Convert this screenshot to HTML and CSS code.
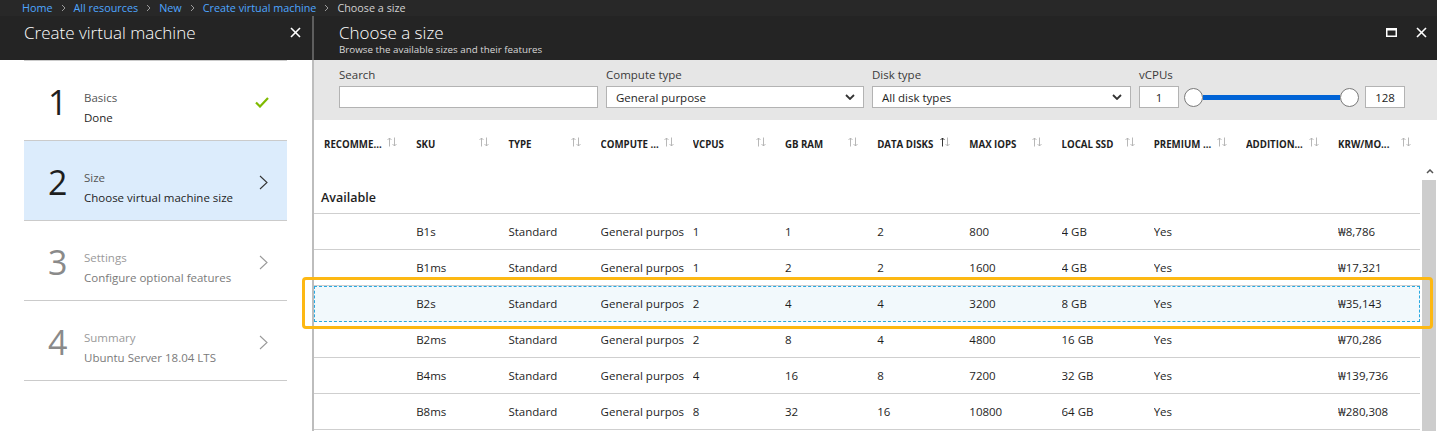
FILE: index.html
```html
<!DOCTYPE html>
<html lang="en">
<head>
<meta charset="utf-8">
<title>Choose a size</title>
<link rel="stylesheet" href="styles.css">
</head>
<body>
<nav class="breadcrumb">
  <a class="crumb">Home</a>
  <svg class="sep" viewBox="0 0 5 8"><polyline points="1,1 4,4 1,7"/></svg>
  <a class="crumb">All resources</a>
  <svg class="sep" viewBox="0 0 5 8"><polyline points="1,1 4,4 1,7"/></svg>
  <a class="crumb">New</a>
  <svg class="sep" viewBox="0 0 5 8"><polyline points="1,1 4,4 1,7"/></svg>
  <a class="crumb">Create virtual machine</a>
  <svg class="sep" viewBox="0 0 5 8"><polyline points="1,1 4,4 1,7"/></svg>
  <span class="crumb current">Choose a size</span>
</nav>

<div class="main">
  <section class="blade-left">
    <header class="blade-head left-head">
      <h1 class="blade-title">Create virtual machine</h1>
      <svg class="close-icon" viewBox="0 0 11 11"><line x1="1" y1="1" x2="10" y2="10"/><line x1="10" y1="1" x2="1" y2="10"/></svg>
    </header>
    <div class="steps">
      <div class="step">
        <div class="step-num">1</div>
        <div class="step-text"><div class="step-label">Basics</div><div class="step-desc">Done</div></div>
        <svg class="check-icon" viewBox="0 0 14 11"><polyline points="1,5.5 5,9.5 13,1"/></svg>
      </div>
      <div class="step active">
        <div class="step-num">2</div>
        <div class="step-text"><div class="step-label">Size</div><div class="step-desc">Choose virtual machine size</div></div>
        <svg class="chev-icon" viewBox="0 0 9 15"><polyline points="1,1 8,7.5 1,14"/></svg>
      </div>
      <div class="step muted">
        <div class="step-num">3</div>
        <div class="step-text"><div class="step-label">Settings</div><div class="step-desc">Configure optional features</div></div>
        <svg class="chev-icon" viewBox="0 0 9 15"><polyline points="1,1 8,7.5 1,14"/></svg>
      </div>
      <div class="step muted">
        <div class="step-num">4</div>
        <div class="step-text"><div class="step-label">Summary</div><div class="step-desc">Ubuntu Server 18.04 LTS</div></div>
        <svg class="chev-icon" viewBox="0 0 9 15"><polyline points="1,1 8,7.5 1,14"/></svg>
      </div>
    </div>
  </section>

  <section class="blade-right">
    <header class="blade-head right-head">
      <div class="head-titles">
        <h1 class="blade-title">Choose a size</h1>
        <p class="blade-sub">Browse the available sizes and their features</p>
      </div>
      <div class="head-icons">
        <svg class="max-icon" viewBox="0 0 11 9"><rect class="max-frame" x="0.75" y="1" width="9.5" height="7.25"/><rect class="max-bar" x="0" y="0" width="11" height="2.5"/></svg>
        <svg class="close-icon" viewBox="0 0 11 11"><line x1="1" y1="1" x2="10" y2="10"/><line x1="10" y1="1" x2="1" y2="10"/></svg>
      </div>
    </header>

    <div class="rbody">
      <div class="filters">
        <div class="field w-search">
          <label class="field-label">Search</label>
          <div class="input"></div>
        </div>
        <div class="field w-compute">
          <label class="field-label">Compute type</label>
          <div class="input select"><span>General purpose</span><svg class="dd-icon" viewBox="0 0 10 6"><polyline points="1,1 5,5 9,1"/></svg></div>
        </div>
        <div class="field w-disk">
          <label class="field-label">Disk type</label>
          <div class="input select"><span>All disk types</span><svg class="dd-icon" viewBox="0 0 10 6"><polyline points="1,1 5,5 9,1"/></svg></div>
        </div>
        <div class="field">
          <label class="field-label">vCPUs</label>
          <div class="range">
            <div class="input num">1</div>
            <div class="slider"><span class="thumb"></span><span class="track"></span><span class="thumb"></span></div>
            <div class="input num">128</div>
          </div>
        </div>
      </div>

      <div class="thead">
        <div class="th"><span class="th-label">RECOMME...</span><svg class="sort" viewBox="0 0 10 10"><path class="up" d="M2.5 9.5V1M0.5 3L2.5 1L4.5 3"/><path class="down" d="M7.5 0.5V9M5.5 7L7.5 9L9.5 7"/></svg></div>
        <div class="th"><span class="th-label">SKU</span><svg class="sort" viewBox="0 0 10 10"><path class="up" d="M2.5 9.5V1M0.5 3L2.5 1L4.5 3"/><path class="down" d="M7.5 0.5V9M5.5 7L7.5 9L9.5 7"/></svg></div>
        <div class="th"><span class="th-label">TYPE</span><svg class="sort" viewBox="0 0 10 10"><path class="up" d="M2.5 9.5V1M0.5 3L2.5 1L4.5 3"/><path class="down" d="M7.5 0.5V9M5.5 7L7.5 9L9.5 7"/></svg></div>
        <div class="th"><span class="th-label">COMPUTE ...</span><svg class="sort" viewBox="0 0 10 10"><path class="up" d="M2.5 9.5V1M0.5 3L2.5 1L4.5 3"/><path class="down" d="M7.5 0.5V9M5.5 7L7.5 9L9.5 7"/></svg></div>
        <div class="th"><span class="th-label">VCPUS</span><svg class="sort" viewBox="0 0 10 10"><path class="up" d="M2.5 9.5V1M0.5 3L2.5 1L4.5 3"/><path class="down" d="M7.5 0.5V9M5.5 7L7.5 9L9.5 7"/></svg></div>
        <div class="th"><span class="th-label">GB RAM</span><svg class="sort" viewBox="0 0 10 10"><path class="up" d="M2.5 9.5V1M0.5 3L2.5 1L4.5 3"/><path class="down" d="M7.5 0.5V9M5.5 7L7.5 9L9.5 7"/></svg></div>
        <div class="th"><span class="th-label">DATA DISKS</span><svg class="sort sorted" viewBox="0 0 10 10"><path class="up" d="M2.5 9.5V1M0.5 3L2.5 1L4.5 3"/><path class="down" d="M7.5 0.5V9M5.5 7L7.5 9L9.5 7"/></svg></div>
        <div class="th"><span class="th-label">MAX IOPS</span><svg class="sort" viewBox="0 0 10 10"><path class="up" d="M2.5 9.5V1M0.5 3L2.5 1L4.5 3"/><path class="down" d="M7.5 0.5V9M5.5 7L7.5 9L9.5 7"/></svg></div>
        <div class="th"><span class="th-label">LOCAL SSD</span><svg class="sort" viewBox="0 0 10 10"><path class="up" d="M2.5 9.5V1M0.5 3L2.5 1L4.5 3"/><path class="down" d="M7.5 0.5V9M5.5 7L7.5 9L9.5 7"/></svg></div>
        <div class="th"><span class="th-label">PREMIUM ...</span><svg class="sort" viewBox="0 0 10 10"><path class="up" d="M2.5 9.5V1M0.5 3L2.5 1L4.5 3"/><path class="down" d="M7.5 0.5V9M5.5 7L7.5 9L9.5 7"/></svg></div>
        <div class="th"><span class="th-label">ADDITION...</span><svg class="sort" viewBox="0 0 10 10"><path class="up" d="M2.5 9.5V1M0.5 3L2.5 1L4.5 3"/><path class="down" d="M7.5 0.5V9M5.5 7L7.5 9L9.5 7"/></svg></div>
        <div class="th"><span class="th-label">KRW/MO...</span><svg class="sort" viewBox="0 0 10 10"><path class="up" d="M2.5 9.5V1M0.5 3L2.5 1L4.5 3"/><path class="down" d="M7.5 0.5V9M5.5 7L7.5 9L9.5 7"/></svg></div>
      </div>

      <div class="tbody">
        <div class="rows">
          <div class="group">Available</div>
          <div class="row"><span class="td"></span><span class="td">B1s</span><span class="td">Standard</span><span class="td">General purpose</span><span class="td">1</span><span class="td">1</span><span class="td">2</span><span class="td">800</span><span class="td">4 GB</span><span class="td">Yes</span><span class="td"></span><span class="td">₩8,786</span></div>
          <div class="row"><span class="td"></span><span class="td">B1ms</span><span class="td">Standard</span><span class="td">General purpose</span><span class="td">1</span><span class="td">2</span><span class="td">2</span><span class="td">1600</span><span class="td">4 GB</span><span class="td">Yes</span><span class="td"></span><span class="td">₩17,321</span></div>
          <div class="row selected"><span class="td"></span><span class="td">B2s</span><span class="td">Standard</span><span class="td">General purpose</span><span class="td">2</span><span class="td">4</span><span class="td">4</span><span class="td">3200</span><span class="td">8 GB</span><span class="td">Yes</span><span class="td"></span><span class="td">₩35,143</span></div>
          <div class="row"><span class="td"></span><span class="td">B2ms</span><span class="td">Standard</span><span class="td">General purpose</span><span class="td">2</span><span class="td">8</span><span class="td">4</span><span class="td">4800</span><span class="td">16 GB</span><span class="td">Yes</span><span class="td"></span><span class="td">₩70,286</span></div>
          <div class="row"><span class="td"></span><span class="td">B4ms</span><span class="td">Standard</span><span class="td">General purpose</span><span class="td">4</span><span class="td">16</span><span class="td">8</span><span class="td">7200</span><span class="td">32 GB</span><span class="td">Yes</span><span class="td"></span><span class="td">₩139,736</span></div>
          <div class="row"><span class="td"></span><span class="td">B8ms</span><span class="td">Standard</span><span class="td">General purpose</span><span class="td">8</span><span class="td">32</span><span class="td">16</span><span class="td">10800</span><span class="td">64 GB</span><span class="td">Yes</span><span class="td"></span><span class="td">₩280,308</span></div>
        </div>
        <div class="scrollbar">
          <div class="sb-up"><svg viewBox="0 0 8 5"><polyline points="1,4 4,1 7,4"/></svg></div>
          <div class="sb-thumb"></div>
        </div>
      </div>
    </div>
  </section>
</div>

<div class="highlight"></div>
</body>
</html>
```

FILE: styles.css
```css
* { box-sizing: border-box; margin: 0; padding: 0; }

html, body { width: 1437px; height: 431px; overflow: hidden; }

body {
  font-family: "Open Sans", "Noto Sans", "Liberation Sans", sans-serif;
  font-size: 12px;
  color: #222;
  background: #fff;
  position: relative;
}

/* breadcrumb */
.breadcrumb {
  height: 16px;
  background: #282828;
  display: flex;
  align-items: center;
  padding-left: 22px;
  font-size: 10.8px;
  line-height: 16px;
}
.crumb { color: #4ea6ff; text-decoration: none; }
.crumb.current { color: #d2d2d2; }
.sep { width: 5px; height: 8px; margin: 0 8px; fill: none; stroke: #9a9a9a; stroke-width: 1; }

.main { display: flex; height: 415px; }

/* blade headers */
.blade-head {
  height: 44px;
  background: #242424;
  color: #fff;
  display: flex;
  align-items: flex-start;
  justify-content: space-between;
  flex: none;
}
.blade-title { font-size: 17px; font-weight: 300; line-height: 20px; }
.close-icon { width: 11px; height: 11px; fill: none; stroke: #fff; stroke-width: 1.6; }

/* left blade */
.blade-left { width: 312px; flex: none; display: flex; flex-direction: column; }
.left-head { padding: 7px 11px 0 24px; }
.left-head .close-icon { margin-top: 4px; }

.steps { margin: 0 25px 0 24px; border-top: 1px solid #cbcbcb; }
.step {
  height: 80px;
  display: flex;
  align-items: center;
  padding: 0 18px 0 24px;
  border-bottom: 1px solid #cbcbcb;
}
.step.active { background: #dcecfc; }
.step-num { width: 36px; font-size: 34px; line-height: 36px; font-weight: 400; color: #1e1e1e; margin-top: 2px; }
.step-text { flex: 1; margin-top: 14px; }
.step-label { font-size: 11.5px; line-height: 20px; color: #555; }
.step-desc { font-size: 11.5px; line-height: 19px; color: #1e1e1e; }
.step.muted .step-num { color: #8a8a8a; }
.step.muted .step-label { color: #9a9a9a; }
.step.muted .step-desc { color: #7a7a7a; }
.check-icon { width: 14px; height: 11px; fill: none; stroke: #7fba00; stroke-width: 2.2; margin-top: 4px; }
.chev-icon { width: 9px; height: 15px; fill: none; stroke: #333; stroke-width: 1.1; margin-right: 1px; margin-top: 3px; }
.step.muted .chev-icon { stroke: #999; }

/* right blade */
.blade-right { flex: 1; min-width: 0; display: flex; flex-direction: column; }
.right-head { border-left: 2px solid #5e5e5e; padding: 7px 10px 0 25px; }
.blade-sub { font-size: 9.8px; line-height: 12px; color: #d8d8d8; margin-top: 1px; }
.head-icons { display: flex; align-items: center; gap: 19px; margin-top: 3px; }
.max-icon { width: 11px; height: 9px; }
.max-frame { fill: none; stroke: #fff; stroke-width: 1.5; }
.max-bar { fill: #fff; }
.head-icons .close-icon { margin-top: 1px; }

.rbody { flex: 1; min-height: 0; display: flex; flex-direction: column; border-left: 2px solid #bdbdbd; }

/* filters */
.filters {
  height: 60px;
  flex: none;
  background: #e6e6e6;
  display: flex;
  gap: 8px;
  padding: 7px 0 0 25px;
}
.field { display: flex; flex-direction: column; }
.field-label { font-size: 11.5px; line-height: 16px; color: #3a3a3a; margin-bottom: 3px; }
.w-search { width: 259px; }
.w-compute { width: 258px; }
.w-disk { width: 259px; }
.input { height: 22px; background: #fff; border: 1px solid #b3b3b3; }
.select {
  display: flex;
  align-items: center;
  justify-content: space-between;
  padding: 0 8px 0 9px;
  font-size: 11.5px;
  color: #1e1e1e;
}
.dd-icon { width: 10px; height: 6px; fill: none; stroke: #333; stroke-width: 1.8; }
.range { display: flex; align-items: center; height: 22px; }
.num { width: 40px; display: flex; align-items: center; justify-content: center; font-size: 11.5px; color: #222; }
.slider { width: 175px; margin: 0 6px 0 5px; display: flex; align-items: center; }
.thumb { width: 19px; height: 19px; border-radius: 50%; background: #fff; border: 1.5px solid #7a7a7a; flex: none; }
.track { flex: 1; height: 5px; background: #0063d6; }

/* table */
.thead {
  height: 43px;
  flex: none;
  display: grid;
  grid-template-columns: repeat(11, 92.2px) 1fr;
  padding: 18px 0 0 10px;
}
.th { display: flex; align-items: flex-start; font-size: 9.7px; font-weight: 700; line-height: 14px; color: #1e1e1e; }
.th-label { width: 63px; flex: none; white-space: nowrap; overflow: hidden; }
.sort { width: 10px; height: 10px; fill: none; stroke: #b0b0b0; stroke-width: 0.9; margin-top: -1px; }
.sort.sorted .up { stroke: #222; }

.tbody { flex: 1; min-height: 0; display: flex; overflow: hidden; }
.rows { flex: 1; min-width: 0; }
.group {
  height: 51px;
  padding: 27px 0 0 7px;
  font-size: 12.5px;
  font-weight: 600;
  line-height: 16px;
  color: #1e1e1e;
  border-bottom: 1px solid #cfcfcf;
}
.row {
  height: 36px;
  display: grid;
  grid-template-columns: repeat(11, 92.2px) 1fr;
  align-items: center;
  padding-left: 10px;
  border-bottom: 1px solid #cfcfcf;
  font-size: 11.5px;
  color: #1e1e1e;
}
.td { white-space: nowrap; overflow: hidden; margin-right: 9px; min-width: 0; }
.row.selected {
  background: #f2f9fc;
  border-bottom-color: transparent;
  outline: 1px dashed #27a9e1;
  outline-offset: -1px;
}

.scrollbar { width: 17px; flex: none; display: flex; flex-direction: column; }
.sb-up { height: 17px; display: flex; align-items: center; justify-content: center; padding-left: 2px; }
.sb-up svg { width: 8px; height: 5px; fill: none; stroke: #555; stroke-width: 1.5; }
.sb-thumb { flex: 1; background: #cdcdcd; margin: 0 1px 0 2px; }

/* annotation overlay */
.highlight {
  position: absolute;
  left: 302px;
  top: 277px;
  width: 1131px;
  height: 52px;
  border: 3px solid #fdb813;
  border-radius: 4px;
  pointer-events: none;
}
```
